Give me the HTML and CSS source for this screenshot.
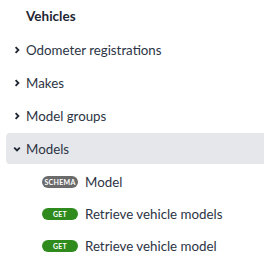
FILE: index.html
```html
<!DOCTYPE html>
<html>
<head>
<meta charset="utf-8">
<link rel="stylesheet" href="styles.css">
</head>
<body>
<nav class="sidebar">
  <div class="group-title">Vehicles</div>
  <ul class="tree">
    <li class="row"><span class="chev"><svg width="8" height="8" viewBox="0 0 8 8"><path d="M2.6 1.2 L5.4 4 L2.6 6.8" fill="none" stroke="currentColor" stroke-width="1.8"/></svg></span><span class="label">Odometer registrations</span></li>
    <li class="row"><span class="chev"><svg width="8" height="8" viewBox="0 0 8 8"><path d="M2.6 1.2 L5.4 4 L2.6 6.8" fill="none" stroke="currentColor" stroke-width="1.8"/></svg></span><span class="label">Makes</span></li>
    <li class="row"><span class="chev"><svg width="8" height="8" viewBox="0 0 8 8"><path d="M2.6 1.2 L5.4 4 L2.6 6.8" fill="none" stroke="currentColor" stroke-width="1.8"/></svg></span><span class="label">Model groups</span></li>
    <li class="row active"><span class="chev"><svg width="8" height="8" viewBox="0 0 8 8"><path d="M1.2 2.6 L4 5.4 L6.8 2.6" fill="none" stroke="currentColor" stroke-width="1.8"/></svg></span><span class="label">Models</span></li>
    <li class="sub"><span class="badge schema">SCHEMA</span><span class="label">Model</span></li>
    <li class="sub"><span class="badge get">GET</span><span class="label">Retrieve vehicle models</span></li>
    <li class="sub"><span class="badge get">GET</span><span class="label">Retrieve vehicle model</span></li>
  </ul>
</nav>
</body>
</html>
```
FILE: styles.css
```css
html, body { margin: 0; padding: 0; background: #fff; }
body { font-family: "Lato", "Noto Sans", sans-serif; color: #2c3444; }
.sidebar { padding-top: 5px; padding-left: 6px; }
.group-title { font-weight: 700; font-size: 13.5px; height: 22px; line-height: 22px; padding-left: 20px; color: #1f2633; }
.tree { list-style: none; margin: 0; padding: 0; }
.row { display: flex; align-items: center; height: 31px; margin-top: 2px; font-size: 13.3px; border-radius: 4px 0 0 4px; }
.row:first-child { margin-top: 7px; }
.row.active { background: #e5e7eb; }
.chev { width: 20px; display: flex; justify-content: center; padding-left: 1px; color: #1f2633; box-sizing: border-box; }
.chev svg { display: block; }
.sub { display: flex; align-items: center; height: 32px; padding-left: 36px; font-size: 13.3px; }
.sub:nth-child(5) { margin-top: 2px; }
.badge { display: inline-flex; align-items: center; justify-content: center; width: 36px; height: 12px; border-radius: 6px; color: #fff; font-size: 7px; font-weight: 700; margin-right: 7px; letter-spacing: 0.3px; }
.badge.schema { background: #6b6b6b; }
.badge.get { background: #2f8b1e; }
```
